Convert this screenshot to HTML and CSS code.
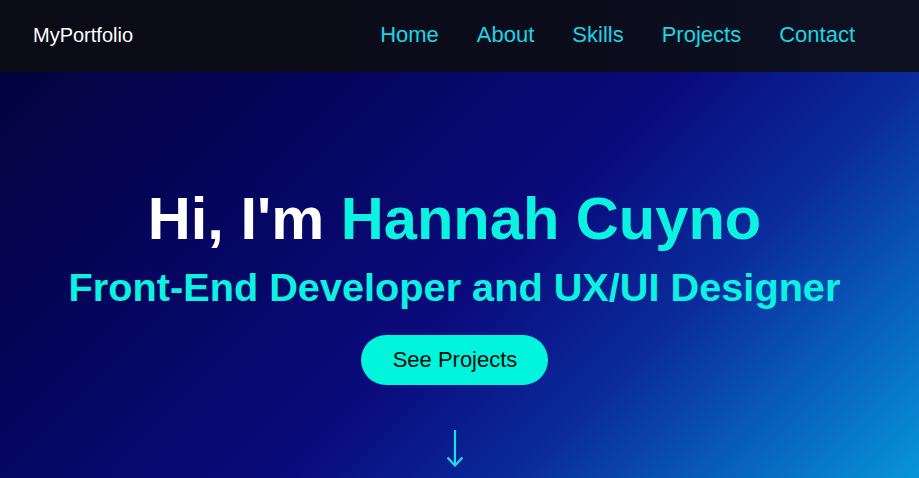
FILE: index.html
```html
<!DOCTYPE html>
<html lang="en">
<head>
<meta charset="utf-8">
<title>MyPortfolio</title>
<link rel="stylesheet" href="styles.css">
</head>
<body>
<header class="site-header">
  <a class="logo" href="#">MyPortfolio</a>
  <nav>
    <ul class="nav-list">
      <li><a href="#">Home</a></li>
      <li><a href="#">About</a></li>
      <li><a href="#">Skills</a></li>
      <li><a href="#">Projects</a></li>
      <li><a href="#">Contact</a></li>
    </ul>
  </nav>
</header>
<main class="hero">
  <h1 class="hero-title">Hi, I'm <span class="accent">Hannah Cuyno</span></h1>
  <p class="hero-subtitle">Front-End Developer and UX/UI Designer</p>
  <a class="btn" href="#">See Projects</a>
  <svg class="scroll-arrow" width="18" height="38" viewBox="0 0 18 38" aria-hidden="true">
    <path d="M9 1 V36" fill="none" stroke="currentColor" stroke-width="2.2"/>
    <path d="M1.5 28.5 L9 36.5 L16.5 28.5" fill="none" stroke="currentColor" stroke-width="2.2" stroke-linejoin="miter"/>
  </svg>
</main>
</body>
</html>
```

FILE: styles.css
```css
* { box-sizing: border-box; }

html, body {
  margin: 0;
  height: 100%;
  overflow: hidden;
}

body {
  font-family: "Liberation Sans", Arial, sans-serif;
  background: #03034a;
}

.site-header {
  height: 72px;
  display: flex;
  align-items: center;
  justify-content: space-between;
  padding: 0 64px 2px 33px;
  background: linear-gradient(90deg, #0b0b16 0%, #0b0c1a 60%, #0c1122 100%);
}

.logo {
  color: #ffffff;
  font-size: 20px;
  text-decoration: none;
}

.nav-list {
  list-style: none;
  margin: 0;
  padding: 0;
  display: flex;
  gap: 38px;
}

.nav-list a {
  color: #18d6e6;
  font-size: 22px;
  text-decoration: none;
}

.hero {
  height: calc(100% - 72px);
  display: flex;
  flex-direction: column;
  align-items: center;
  padding: 113px 10px 0 0;
  background: linear-gradient(135deg, #03033f 0%, #05055c 25%, #08086e 40%, #0a0b7c 52%, #0a2c9c 70%, #0860bd 85%, #0896d8 100%);
}

.hero-title {
  margin: 0;
  color: #ffffff;
  font-size: 59.6px;
  font-weight: 700;
  line-height: 68px;
}

.accent { color: #0cf2e0; }

.hero-subtitle {
  margin: 11px 0 0;
  color: #0cf2e0;
  font-size: 39.7px;
  font-weight: 700;
  line-height: 46px;
}

.btn {
  margin-top: 25px;
  display: inline-block;
  padding: 12px 31px 12px 32px;
  border-radius: 25px;
  background: #00f5dc;
  color: #0a0a0a;
  font-size: 22px;
  line-height: 26px;
  text-decoration: none;
}

.scroll-arrow {
  margin-top: 44px;
  color: #1cdce8;
  display: block;
}
```
